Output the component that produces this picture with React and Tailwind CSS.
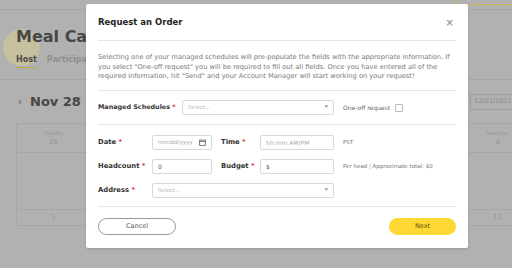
import React from "react";

const F = { fontFamily: '"DejaVu Sans", "Noto Sans", sans-serif' };

function Label({ children, w = "w-[54px]", size = "text-[6.8px]" }) {
  return (
    <div className={`${w} ${size} shrink-0 whitespace-nowrap font-semibold text-[#333]`}>
      {children} <span className="text-[#e53935]">*</span>
    </div>
  );
}

function Select({ w }) {
  return (
    <div className={`${w} h-[15px] border border-[#d9d9d9] rounded-[2px] flex items-center justify-between px-[5px] text-[5.5px] text-[#b5b5b5]`}>
      <span>Select...</span>
      <span className="text-[4.5px] text-[#aaa]">▼</span>
    </div>
  );
}

function Input({ w, children, muted = true }) {
  return (
    <div className={`${w} h-[15px] border border-[#d9d9d9] rounded-[2px] flex items-center px-[5px] text-[6px] whitespace-nowrap overflow-hidden ${muted ? "text-[#aaa]" : "text-[#555]"}`}>
      {children}
    </div>
  );
}

export default function App() {
  const days = ["Sunday", "Monday", "Tuesday", "Wednesday", "Thursday", "Friday", "Saturday"];
  const nums = ["28", "29", "30", "1", "2", "3", "4"];
  const nums2 = ["5", "6", "7", "8", "9", "10", "11"];
  return (
    <div className="relative w-[512px] h-[270px] overflow-hidden bg-white" style={F}>
      {/* dimmed page */}
      <div className="w-[512px] h-[268px] bg-[#b1b1b1] flex flex-col overflow-hidden">
        <div className="h-[10px] border-b border-[#a6a6a6] shrink-0 flex justify-end">
          <div className="w-[60px] h-[5px] border border-[#c9b55a] rounded-b-full border-t-0 mr-[-4px]"></div>
        </div>
        <div className="relative h-[70px] shrink-0 border-b border-[#a6a6a6] px-[16px]">
          <div className="absolute left-[3px] top-[19px] w-[37px] h-[37px] rounded-full bg-[#c7c09f]"></div>
          <div className="relative pt-[17px] text-[16px] font-bold text-[#474747] leading-[20px]">Meal Calendar</div>
          <div className="relative mt-[7px] flex gap-[10px] text-[8px] font-semibold leading-[12px]">
            <div className="text-[#4a4a4a] border-b border-[#bfa64a] pb-[1px]">Host</div>
            <div className="text-[#8e8e8e]">Participant</div>
          </div>
        </div>
        <div className="relative h-[43px] shrink-0 flex items-center px-[18px] gap-[8px]">
          <span className="text-[10px] text-[#4a4a4a]">‹</span>
          <span className="text-[13px] font-bold text-[#474747]">Nov 28 - Dec 4</span>
          <div className="absolute left-[462px] top-[14px] flex items-center gap-[2px] text-[6.5px] text-[#8a8a8a]">
            <span>p:</span>
            <div className="h-[16px] w-[60px] border border-[#9e9e9e] rounded-[2px] px-[3px] flex items-center">12/01/2021</div>
          </div>
        </div>
        <div className="ml-[16px] grid grid-cols-[repeat(7,74px)] border-t border-l border-[#a6a6a6] w-[600px]">
          {days.map((d, i) => (
            <div key={d} className="h-[29px] border-r border-b border-[#a6a6a6] flex flex-col items-center justify-center text-[#939393] leading-[9px]">
              <span className="text-[5px]">{d}</span>
              <span className="text-[6.5px]">{nums[i]}</span>
            </div>
          ))}
          {days.map((d) => (
            <div key={d + "b"} className="h-[57px] border-r border-b border-[#a6a6a6]"></div>
          ))}
          {nums2.map((n) => (
            <div key={n} className="h-[16px] border-r border-b border-[#a6a6a6] flex items-center justify-center text-[6.5px] text-[#939393]">{n}</div>
          ))}
        </div>
      </div>

      {/* modal */}
      <div className="absolute left-[86px] top-[4px] w-[382px] h-[244px] bg-white rounded-[2px] shadow-sm flex flex-col px-[12px]">
        <div className="h-[37px] shrink-0 flex items-center justify-between border-b border-[#e6e6e6]">
          <span className="text-[8.5px] font-bold text-[#222]">Request an Order</span>
          <span className="text-[10px] text-[#9a9a9a] font-bold mr-[2px]">×</span>
        </div>
        <div className="h-[50px] shrink-0 border-b border-[#e6e6e6] pt-[12px] pr-[3px] text-[6.7px] leading-[9.7px] text-[#7a7a7a]">
          Selecting one of your managed schedules will pre-populate the fields with the appropriate information. If you select "One-off request" you will be required to fill out all fields. Once you have entered all of the required information, hit "Send" and your Account Manager will start working on your request!
        </div>
        <div className="h-[34px] shrink-0 border-b border-[#e6e6e6] flex items-center">
          <Label w="w-[84px]" size="text-[6.4px]">Managed Schedules</Label>
          <Select w="w-[152px]" />
          <span className="ml-[9px] text-[6px] text-[#666]">One-off request</span>
          <div className="ml-[5px] w-[8px] h-[8px] border border-[#bbb] rounded-[1px]"></div>
        </div>
        <div className="h-[82px] shrink-0 border-b border-[#e6e6e6] pt-[10px] flex flex-col gap-[9px]">
          <div className="flex items-center">
            <Label>Date</Label>
            <Input w="w-[60px]">
              <span className="flex-1 text-[5.5px]">mm/dd/yyyy</span>
              <svg width="7" height="7" viewBox="0 0 10 10"><rect x="1" y="1.5" width="8" height="7.5" fill="none" stroke="#444" strokeWidth="1"/><line x1="1" y1="3.5" x2="9" y2="3.5" stroke="#444"/></svg>
            </Input>
            <div className="ml-[9px] w-[39px] whitespace-nowrap text-[6.8px] font-semibold text-[#333]">Time <span className="text-[#e53935]">*</span></div>
            <Input w="w-[74px]">hh:mm AM/PM</Input>
            <span className="ml-[9px] text-[5.5px] text-[#777]">PST</span>
          </div>
          <div className="flex items-center">
            <Label>Headcount</Label>
            <Input w="w-[60px]" muted={false}>0</Input>
            <div className="ml-[9px] w-[39px] whitespace-nowrap text-[6.8px] font-semibold text-[#333]">Budget <span className="text-[#e53935]">*</span></div>
            <Input w="w-[74px]" muted={false}>$</Input>
            <span className="ml-[9px] text-[5.5px] text-[#777]">Per head | Approximate total: $0</span>
          </div>
          <div className="flex items-center">
            <Label>Address</Label>
            <Select w="w-[182px]" />
          </div>
        </div>
        <div className="flex-1 flex items-center justify-between pb-[2px]">
          <button className="w-[78px] h-[17px] rounded-full border border-[#999] text-[6.5px] text-[#555]">Cancel</button>
          <button className="w-[67px] h-[17px] rounded-full bg-[#fdd835] text-[6.5px] text-[#5a4a00]">Next</button>
        </div>
      </div>
    </div>
  );
}
